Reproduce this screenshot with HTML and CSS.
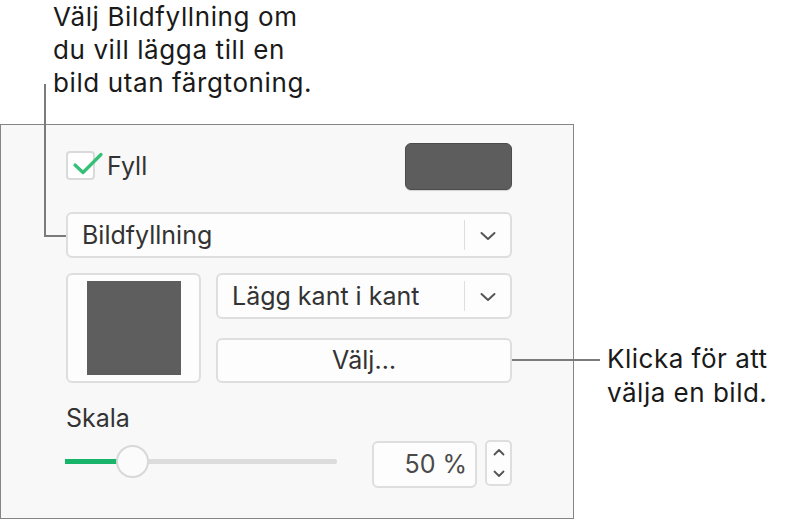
FILE: index.html
```html
<!DOCTYPE html>
<html lang="sv">
<head>
<meta charset="utf-8">
<title>Bildfyllning</title>
<link rel="stylesheet" href="styles.css">
</head>
<body>
<div class="page">
  <p class="callout callout-top">Välj Bildfyllning om<br>du vill lägga till en<br>bild utan färgtoning.</p>
  <div class="main">
    <section class="panel">
      <div class="fill-row">
        <label class="check">
          <span class="box">
            <svg class="tick" width="36" height="26" viewBox="0 0 36 26"><path d="M5 14 L13 21.5 L31 3.5" fill="none" stroke="#35bf77" stroke-width="3.2" stroke-linecap="round" stroke-linejoin="round"/></svg>
          </span>
          <span class="check-label">Fyll</span>
        </label>
        <div class="color-well"></div>
      </div>
      <div class="select select-wide">
        <span class="select-text">Bildfyllning</span>
        <span class="select-sep"></span>
        <span class="select-arrow"><svg width="16" height="10" viewBox="0 0 16 10"><path d="M1.5 2 L8 8 L14.5 2" fill="none" stroke="#555" stroke-width="2" stroke-linecap="round" stroke-linejoin="round"/></svg></span>
      </div>
      <div class="image-row">
        <div class="image-well"><div class="image"></div></div>
        <div class="image-controls">
          <div class="select">
            <span class="select-text">Lägg kant i kant</span>
            <span class="select-sep"></span>
            <span class="select-arrow"><svg width="16" height="10" viewBox="0 0 16 10"><path d="M1.5 2 L8 8 L14.5 2" fill="none" stroke="#555" stroke-width="2" stroke-linecap="round" stroke-linejoin="round"/></svg></span>
          </div>
          <div class="btn">Välj…</div>
        </div>
      </div>
      <div class="label">Skala</div>
      <div class="scale-row">
        <div class="slider">
          <div class="track"><div class="track-fill"></div></div>
          <div class="knob"></div>
        </div>
        <div class="number">50 %</div>
        <div class="stepper">
          <svg width="12" height="8" viewBox="0 0 12 8"><path d="M1.5 6.5 L6 2 L10.5 6.5" fill="none" stroke="#555" stroke-width="1.8" stroke-linecap="round" stroke-linejoin="round"/></svg>
          <svg width="12" height="8" viewBox="0 0 12 8"><path d="M1.5 1.5 L6 6 L10.5 1.5" fill="none" stroke="#555" stroke-width="1.8" stroke-linecap="round" stroke-linejoin="round"/></svg>
        </div>
      </div>
    </section>
    <p class="callout callout-right">Klicka för att<br>välja en bild.</p>
  </div>
  <div class="leader leader-top-v"></div>
  <div class="leader leader-top-h"></div>
  <div class="leader leader-right"></div>
</div>
</body>
</html>
```
FILE: styles.css
```css
* { box-sizing: border-box; }
html, body { margin: 0; padding: 0; background: #ffffff; }
body {
  font-family: Inter, "Noto Sans", "Liberation Sans", sans-serif;
  color: #1c1c1c;
}
.page {
  position: relative;
  width: 790px;
  height: 519px;
  padding-top: 0;
  overflow: hidden;
}
.callout {
  margin: 0;
  font-size: 26px;
  line-height: 33px;
  color: #1a1a1a;
}
.callout-top { padding-left: 53px; height: 100px; letter-spacing: 0.6px; }
.main {
  display: flex;
  align-items: flex-start;
  margin-top: 24px;
}
.panel {
  width: 574px;
  height: 395px;
  background: #f8f8f8;
  border: 1px solid #858585;
  padding: 18px 61px 0 65px;
  color: #333;
  font-size: 25px;
}
.callout-right {
  margin-left: 33px;
  margin-top: 218px;
  line-height: 34px;
  letter-spacing: 0.5px;
}
.fill-row {
  height: 47px;
  display: flex;
  align-items: center;
  justify-content: space-between;
}
.check { display: flex; align-items: center; gap: 12px; }
.box {
  position: relative;
  width: 29px;
  height: 29px;
  margin-top: -2px;
  border: 2px solid #dadada;
  border-radius: 4px;
  background: #fff;
}
.tick { position: absolute; left: 2px; top: -2px; overflow: visible; }
.check-label { line-height: 33px; }
.color-well {
  width: 107px;
  height: 47px;
  background: #5d5d5d;
  border: 1px solid #4c4c4c;
  border-radius: 6px;
  box-shadow: 0 1px 1px rgba(0,0,0,0.15);
}
.select {
  height: 46px;
  display: flex;
  align-items: center;
  background: #fdfdfd;
  border: 2px solid #dedede;
  border-radius: 6px;
}
.select-wide { margin-top: 22px; }
.select-text { flex: 1; padding-left: 14px; line-height: 33px; white-space: nowrap; }
.select-sep { width: 1px; height: 30px; background: #dedede; }
.select-arrow {
  width: 45px;
  display: flex;
  justify-content: center;
  align-items: center;
  padding-top: 2px;
}
.image-row {
  margin-top: 15px;
  height: 110px;
  display: flex;
  gap: 15px;
}
.image-well {
  width: 135px;
  height: 110px;
  background: #fdfdfd;
  border: 2px solid #dedede;
  border-radius: 6px;
  display: flex;
  align-items: center;
  justify-content: center;
}
.image { width: 94px; height: 94px; background: #5e5e5e; }
.image-controls {
  flex: 1;
  display: flex;
  flex-direction: column;
  gap: 19px;
}
.btn {
  height: 45px;
  background: #fdfdfd;
  border: 2px solid #dedede;
  border-radius: 6px;
  display: flex;
  align-items: center;
  justify-content: center;
  line-height: 33px;
}
.label { margin-top: 19px; line-height: 33px; }
.scale-row {
  margin-top: 6px;
  height: 47px;
  display: flex;
  align-items: flex-start;
}
.slider {
  position: relative;
  width: 272px;
  height: 33px;
  margin-left: -1px;
  margin-top: 4px;
  display: flex;
  align-items: center;
}
.track { width: 100%; height: 5px; background: #dcdcdc; border-radius: 2px; }
.track-fill { width: 52px; height: 5px; background: #17b469; }
.knob {
  position: absolute;
  left: 51px;
  top: 0;
  width: 33px;
  height: 33px;
  border-radius: 50%;
  background: #fbfbfb;
  border: 2px solid #d8d8d8;
}
.number {
  margin-left: 35px;
  width: 105px;
  height: 47px;
  background: #fdfdfd;
  border: 2px solid #dedede;
  border-radius: 6px;
  display: flex;
  align-items: center;
  justify-content: flex-end;
  padding-right: 8px;
  color: #4a4a4a;
  line-height: 33px;
}
.stepper {
  margin-left: 8px;
  margin-top: -1px;
  width: 27px;
  height: 46px;
  background: #fdfdfd;
  border: 2px solid #dedede;
  border-radius: 5px;
  display: flex;
  flex-direction: column;
  align-items: center;
  justify-content: center;
  gap: 14px;
}
.leader { position: absolute; background: #7b7b7b; }
.leader-top-v { left: 44px; top: 84px; width: 2px; height: 153px; }
.leader-top-h { left: 44px; top: 235px; width: 22px; height: 2px; }
.leader-right { left: 512px; top: 359px; width: 88px; height: 2px; }
```
